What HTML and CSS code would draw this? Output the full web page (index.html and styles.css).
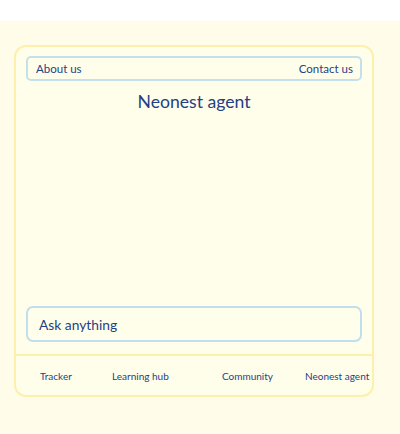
FILE: index.html
```html
<!DOCTYPE html>
<html>
<head>
<meta charset="utf-8">
<link rel="stylesheet" href="styles.css">
</head>
<body>
<div class="top"></div>
<main class="page">
  <section class="card">
    <nav class="nav">
      <span>About us</span>
      <span>Contact us</span>
    </nav>
    <h1 class="title">Neonest agent</h1>
    <div class="spacer"></div>
    <div class="ask">Ask anything</div>
    <footer class="tabs">
      <span class="tab">Tracker</span>
      <span class="tab">Learning hub</span>
      <span class="tab">Community</span>
      <span class="tab">Neonest agent</span>
    </footer>
  </section>
</main>
</body>
</html>
```
FILE: styles.css
```css
html, body { margin: 0; padding: 0; }
body {
  width: 400px;
  height: 434px;
  background: #fffde9;
  font-family: "Lato", "Noto Sans", sans-serif;
  color: #1f3f86;
  overflow: hidden;
}
.top { height: 21px; background: #ffffff; }
.page { padding: 24px 0 0 14px; }
.card {
  width: 360px;
  height: 352px;
  border: 2px solid #fdf0ac;
  border-radius: 12px;
  background: #fffeea;
  display: flex;
  flex-direction: column;
  box-sizing: border-box;
}
.nav {
  margin: 9px 10px 0 10px;
  height: 25px;
  border: 2px solid #c3e1ea;
  border-radius: 5px;
  box-sizing: border-box;
  display: flex;
  justify-content: space-between;
  align-items: center;
  padding: 0 7px 0 8px;
  font-size: 11.5px;
}
.title {
  margin: 10px 0 0 0;
  text-align: center;
  font-weight: 400;
  font-size: 17.6px;
  line-height: 22px;
}
.spacer { flex: 1; }
.ask {
  margin: 0 10px;
  height: 36px;
  border: 2px solid #bfdfef;
  border-radius: 7px;
  box-sizing: border-box;
  display: flex;
  align-items: center;
  padding-left: 11px;
  font-size: 13.8px;
}
.tabs {
  margin-top: 12px;
  border-top: 2px solid #fdf0ac;
  height: 39px;
  display: grid;
  grid-template-columns: 72px 110px 83px auto;
  align-items: center;
  font-size: 10px;
  padding-left: 24px;
  white-space: nowrap;
}
```
